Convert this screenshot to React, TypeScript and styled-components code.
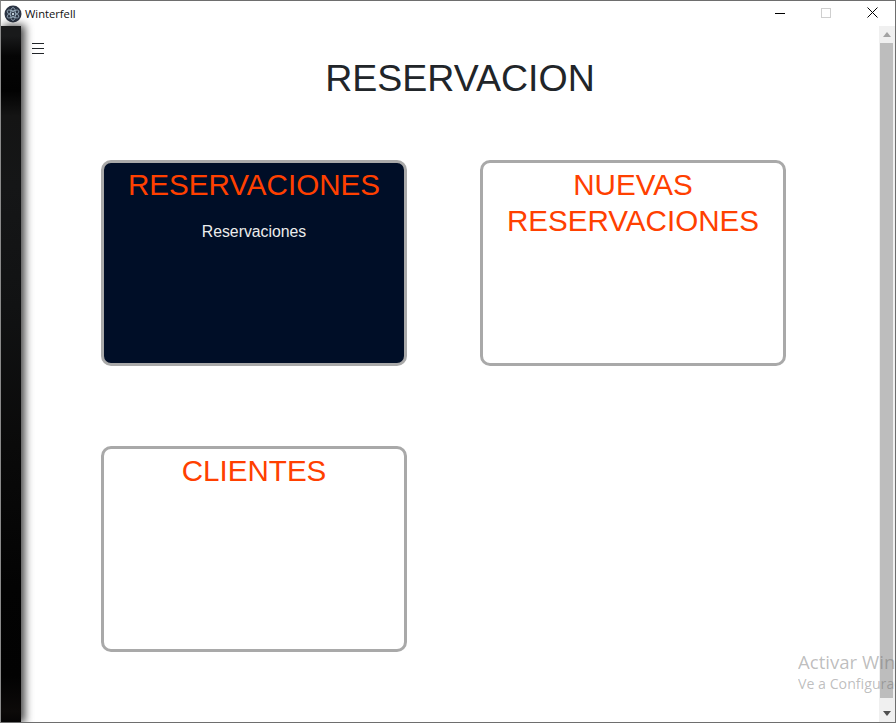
import React from "react";
import styled, { createGlobalStyle } from "styled-components";

const Global = createGlobalStyle`
  html, body { margin: 0; padding: 0; background: #fff; overflow: hidden; }
  body { font-family: "Liberation Sans", Arial, sans-serif; }
`;

const Frame = styled.div`
  position: relative;
  box-sizing: border-box;
  width: 896px;
  height: 723px;
  border: 1px solid #6e6e6e;
  border-left-color: #8a8a8a;
  display: flex;
  flex-direction: column;
  overflow: hidden;
  background: #fff;
`;

const TitleBar = styled.header`
  height: 25px;
  flex: none;
  display: flex;
  align-items: center;
  padding-left: 3px;
  background: #fff;
`;

const AppName = styled.span`
  margin-left: 3px;
  font-family: "Open Sans", sans-serif;
  font-size: 11.2px;
  color: #111;
`;

const WindowButtons = styled.div`
  margin-left: auto;
  display: flex;
  align-items: center;
  height: 100%;
`;

const WindowButton = styled.div`
  width: 46px;
  height: 25px;
  display: flex;
  align-items: center;
  justify-content: center;
  margin-top: -2px;
`;

const Body = styled.div`
  flex: 1;
  display: flex;
  min-height: 0;
`;

const Sidebar = styled.aside`
  width: 20px;
  flex: none;
  background: linear-gradient(
    180deg,
    #191a1b 0,
    #191a1b 10px,
    #050505 30px,
    #020202 65px,
    #141414 90px,
    #151617 160px,
    #111213 280px,
    #0a0a0a 420px,
    #030303 560px,
    #020202 650px,
    #0c0a09 685px,
    #060505 100%
  );
  box-shadow: 3px 0 9px 1px rgba(0, 0, 0, 0.72);
  z-index: 1;
`;

const Main = styled.main`
  flex: 1;
  min-width: 0;
  padding: 17px 0 0 11px;
`;

const MenuButton = styled.div`
  width: 12px;
  height: 11px;
  display: flex;
  flex-direction: column;
  justify-content: space-between;
`;

const MenuLine = styled.span`
  display: block;
  height: 1px;
  background: #212529;
`;

const PageTitle = styled.h1`
  margin: 0;
  padding: 3px 0 0 9px;
  text-align: center;
  font-size: 37.5px;
  line-height: 43px;
  font-weight: 400;
  color: #212529;
`;

const CardGrid = styled.div`
  display: grid;
  grid-template-columns: 306px 306px;
  grid-auto-rows: 206px;
  column-gap: 73px;
  row-gap: 80px;
  margin: 60px 0 0 69px;
`;

const Card = styled.section<{ $dark?: boolean }>`
  box-sizing: border-box;
  border: 3px solid #a9a9a9;
  border-radius: 10px;
  background: ${(p) => (p.$dark ? "#000e27" : "#fff")};
  padding: 4px 10px 0;
  text-align: center;
`;

const CardTitle = styled.h2`
  margin: 0;
  font-size: 29.6px;
  line-height: 36px;
  font-weight: 400;
  color: #ff4000;
`;

const CardText = styled.p`
  margin: 20px 0 0;
  font-size: 15.8px;
  line-height: 18px;
  font-weight: 400;
  color: #ececec;
`;

const Scrollbar = styled.div`
  width: 16px;
  flex: none;
  background: #f0f0f0;
  display: flex;
  flex-direction: column;
  align-items: center;
`;

const ScrollArrow = styled.div`
  height: 17px;
  flex: none;
  display: flex;
  align-items: center;
  justify-content: center;
`;

const ScrollTrack = styled.div`
  flex: 1;
  width: 100%;
  min-height: 0;
  padding: 0 2px 0 1px;
  box-sizing: border-box;
`;

const ScrollThumb = styled.div`
  width: 100%;
  height: 655px;
  background: #bdbdbd;
`;

const Watermark = styled.div`
  position: absolute;
  left: 797px;
  top: 648px;
  width: 98px;
  overflow: hidden;
  white-space: nowrap;
  font-family: "Open Sans", sans-serif;
  color: rgba(110, 110, 110, 0.45);
`;

const WatermarkTitle = styled.div`
  font-size: 18.6px;
  line-height: 25px;
`;

const WatermarkText = styled.div`
  font-size: 14.2px;
  line-height: 20px;
`;

const AppLogo = () => (
  <svg width="18" height="18" viewBox="0 0 18 18" aria-hidden="true">
    <circle cx="9" cy="9" r="8.5" fill="#2b3444" />
    <g fill="none" stroke="#9fb4c4" strokeWidth="0.8">
      <ellipse cx="9" cy="9" rx="6.5" ry="2.6" transform="rotate(30 9 9)" />
      <ellipse cx="9" cy="9" rx="6.5" ry="2.6" transform="rotate(90 9 9)" />
      <ellipse cx="9" cy="9" rx="6.5" ry="2.6" transform="rotate(150 9 9)" />
    </g>
    <circle cx="9" cy="9" r="1.2" fill="#c4d4de" />
  </svg>
);

export default function App() {
  return (
    <>
      <Global />
      <Frame>
        <TitleBar>
          <AppLogo />
          <AppName>Winterfell</AppName>
          <WindowButtons>
            <WindowButton>
              <svg width="10" height="10" viewBox="0 0 10 10" aria-hidden="true">
                <path d="M0 5.5H10" stroke="#000" strokeWidth="1" />
              </svg>
            </WindowButton>
            <WindowButton>
              <svg width="10" height="10" viewBox="0 0 10 10" aria-hidden="true">
                <rect x="0.5" y="0.5" width="9" height="9" fill="none" stroke="#cfcfcf" />
              </svg>
            </WindowButton>
            <WindowButton>
              <svg width="11" height="11" viewBox="0 0 11 11" aria-hidden="true">
                <path d="M0.5 0.5L10.5 10.5M10.5 0.5L0.5 10.5" stroke="#000" strokeWidth="1" />
              </svg>
            </WindowButton>
          </WindowButtons>
        </TitleBar>
        <Body>
          <Sidebar />
          <Main>
            <MenuButton>
              <MenuLine />
              <MenuLine />
              <MenuLine />
            </MenuButton>
            <PageTitle>RESERVACION</PageTitle>
            <CardGrid>
              <Card $dark>
                <CardTitle>RESERVACIONES</CardTitle>
                <CardText>Reservaciones</CardText>
              </Card>
              <Card>
                <CardTitle>NUEVAS RESERVACIONES</CardTitle>
              </Card>
              <Card>
                <CardTitle>CLIENTES</CardTitle>
              </Card>
            </CardGrid>
          </Main>
          <Scrollbar>
            <ScrollArrow>
              <svg width="8" height="5" viewBox="0 0 8 5" aria-hidden="true">
                <path d="M4 0L8 5H0Z" fill="#a3a3a3" />
              </svg>
            </ScrollArrow>
            <ScrollTrack>
              <ScrollThumb />
            </ScrollTrack>
            <ScrollArrow>
              <svg width="8" height="5" viewBox="0 0 8 5" aria-hidden="true">
                <path d="M0 0H8L4 5Z" fill="#505050" />
              </svg>
            </ScrollArrow>
          </Scrollbar>
        </Body>
        <Watermark>
          <WatermarkTitle>Activar Windows</WatermarkTitle>
          <WatermarkText>Ve a Configuración</WatermarkText>
        </Watermark>
      </Frame>
    </>
  );
}
